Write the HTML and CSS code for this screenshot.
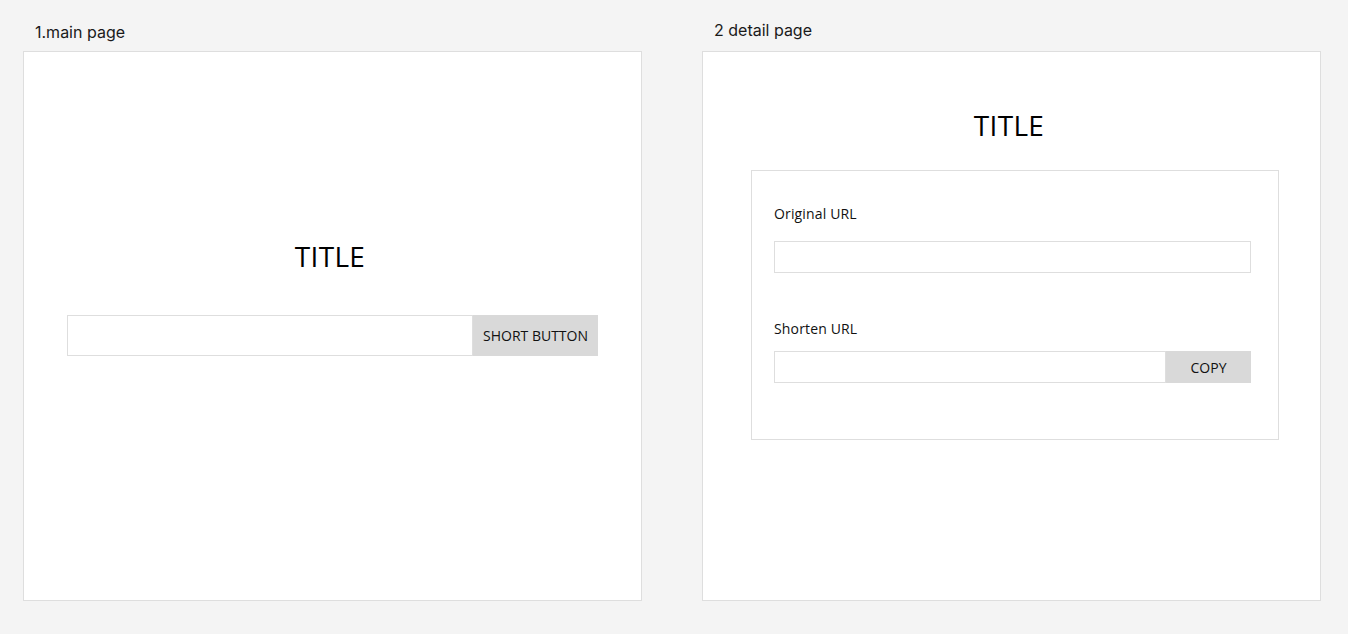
FILE: index.html
```html
<!DOCTYPE html>
<html lang="en">
<head>
<meta charset="utf-8">
<title>URL shortener wireframes</title>
<link rel="stylesheet" href="styles.css">
</head>
<body>
<div class="board">
  <section class="col">
    <div class="label label-main">1.main page</div>
    <div class="frame frame-main">
      <h1 class="title">TITLE</h1>
      <div class="row row-main">
        <div class="field"></div>
        <div class="btn btn-short">SHORT BUTTON</div>
      </div>
    </div>
  </section>
  <section class="col">
    <div class="label label-detail">2 detail page</div>
    <div class="frame frame-detail">
      <h1 class="title">TITLE</h1>
      <div class="card">
        <div class="field-label">Original URL</div>
        <div class="field field-full"></div>
        <div class="field-label field-label-second">Shorten URL</div>
        <div class="row row-detail">
          <div class="field"></div>
          <div class="btn btn-copy">COPY</div>
        </div>
      </div>
    </div>
  </section>
</div>
</body>
</html>
```

FILE: styles.css
```css
* { box-sizing: border-box; }
html, body {
  margin: 0;
  padding: 0;
  background: #f4f4f4;
}
body {
  font-family: "Open Sans", "Noto Sans", sans-serif;
  color: #000;
  height: 634px;
  overflow: hidden;
}
.board {
  display: flex;
  gap: 60px;
  padding-left: 23px;
}
.col {
  width: 619px;
  display: flex;
  flex-direction: column;
}
.label {
  height: 51px;
  padding-left: 12px;
  font-family: Inter, "Liberation Sans", sans-serif;
  font-size: 16px;
  line-height: 20px;
  color: #1a1a1a;
}
.label-main { padding-top: 22px; }
.label-detail { padding-top: 20px; }
.frame {
  height: 550px;
  background: #fff;
  border: 1px solid #dedede;
  display: flex;
  flex-direction: column;
  align-items: center;
}
.frame-main { padding-top: 185px; }
.frame-detail { padding-top: 54px; }
.title {
  margin: 0 5px 0 0;
  font-size: 28px;
  font-weight: 400;
  line-height: 38px;
  letter-spacing: 0.3px;
}
.row {
  display: flex;
}
.row-main {
  margin-top: 40px;
  width: 531px;
  height: 41px;
}
.field {
  flex: 1;
  border: 1px solid #dedede;
  background: #fff;
}
.btn {
  display: flex;
  align-items: center;
  justify-content: center;
  background: #d9d9d9;
  font-size: 14px;
  color: #111;
}
.btn-short { width: 125px; }
.card {
  margin-top: 26px;
  align-self: flex-start;
  margin-left: 48px;
  width: 528px;
  height: 270px;
  border: 1px solid #dedede;
  padding: 33px 0 0 22px;
  display: flex;
  flex-direction: column;
}
.field-label {
  font-size: 14px;
  line-height: 19px;
  color: #111;
  letter-spacing: 0.15px;
}
.field-label-second { margin-top: 46px; }
.field-full {
  flex: none;
  margin-top: 18px;
  width: 477px;
  height: 32px;
}
.row-detail {
  margin-top: 13px;
  width: 477px;
  height: 32px;
}
.btn-copy { width: 85px; }
```
